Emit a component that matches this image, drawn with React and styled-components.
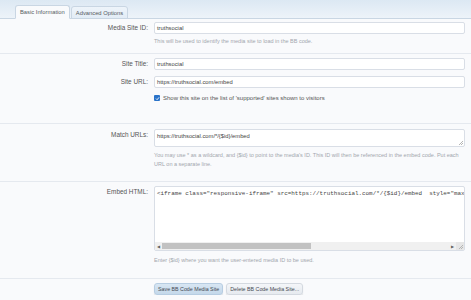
import React from 'react';
import styled, { createGlobalStyle } from 'styled-components';

const GlobalStyle = createGlobalStyle`
    body {
        margin: 0;
        background: #f9fafc;
        font-family: "Liberation Sans", Arial, sans-serif;
        color: #3a3a3a;
    }
`

const Header = styled.div`
    height: 18px;
    background: linear-gradient(#dce8f3, #edf3f9);
    border-bottom: 1px solid #c9d6e3;
    display: flex;
    align-items: flex-end;
    padding-left: 15px;
    gap: 1px;
`

const Tab = styled.div`
    height: ${p => (p.active ? '14px' : '13px')};
    margin-bottom: -1px;
    padding: 0 4px;
    display: flex;
    align-items: center;
    font-size: 5.8px;
    color: #555a62;
    background: ${p => (p.active ? '#f9fafc' : 'linear-gradient(#eef4fa, #e2ecf6)')};
    border: 1px solid #c9d6e3;
    border-bottom-color: ${p => (p.active ? '#f9fafc' : '#c9d6e3')};
    border-radius: 3px 3px 0 0;
    box-sizing: border-box;
`

const Section = styled.div`
    display: flex;
    flex-direction: column;
    gap: ${p => p.gap || 0}px;
    padding: ${p => p.top}px 6px ${p => p.bottom}px 0;
    border-bottom: ${p => (p.last ? 'none' : '1px solid #e5e9ef')};
`

const Row = styled.div`
    display: grid;
    grid-template-columns: 148px 1fr;
    column-gap: 6px;
`

const Label = styled.div`
    text-align: right;
    font-size: 6.4px;
    line-height: 12px;
    color: #555;
`

const Field = styled.div`
    display: flex;
    flex-direction: column;
    min-width: 0;
`

const Input = styled.div`
    height: 12px;
    box-sizing: border-box;
    background: #fff;
    border: 1px solid #d9dee6;
    border-radius: 2px;
    padding: 0 2px;
    font-size: 5.8px;
    line-height: 10px;
    color: #444;
`

const TextArea = styled.div`
    position: relative;
    height: ${p => p.h}px;
    box-sizing: border-box;
    background: #fff;
    border: 1px solid #d9dee6;
    border-radius: 2px;
    display: flex;
    flex-direction: column;
    overflow: hidden;
`

const AreaText = styled.div`
    flex: 1;
    padding: 2px 2px 0;
    font-size: ${p => (p.mono ? '5.9px' : '5.8px')};
    font-family: ${p => (p.mono ? '"Liberation Mono", "DejaVu Sans Mono", monospace' : 'inherit')};
    line-height: 9px;
    white-space: pre;
    overflow: hidden;
    color: #444;
`

const Grip = styled.span`
    position: absolute;
    right: 1px;
    bottom: 1px;
    width: 4px;
    height: 4px;
    background: linear-gradient(135deg, transparent 45%, #b5b5b5 45%, #b5b5b5 55%, transparent 55%, transparent 70%, #b5b5b5 70%, #b5b5b5 80%, transparent 80%);
`

const ScrollBar = styled.div`
    height: 8px;
    display: flex;
    align-items: center;
    background: #f0f0f0;
    font-size: 4px;
    color: #606060;
`

const Arrow = styled.span`
    width: 7px;
    text-align: center;
`

const Track = styled.div`
    flex: 1;
    height: 100%;
    display: flex;
    align-items: center;
`

const Thumb = styled.div`
    height: 6px;
    background: #c2c2c2;
`

const Corner = styled.div`
    width: 8px;
    height: 8px;
    background: #e6e6e6;
    position: relative;
`

const Hint = styled.div`
    margin-top: ${p => p.mt}px;
    font-size: 5.5px;
    line-height: ${p => p.lh || 8}px;
    color: #a2a6ad;
`

const CheckRow = styled.div`
    margin-top: 5px;
    height: 10px;
    display: flex;
    align-items: center;
    gap: 3px;
    font-size: 6px;
    color: #555;
`

const Box = styled.span`
    width: 6px;
    height: 6px;
    border-radius: 1px;
    background: #2a73c9;
    display: flex;
    align-items: center;
    justify-content: center;
`

const Buttons = styled.div`
    grid-column: 2;
    display: flex;
    gap: 3px;
`

const Button = styled.div`
    height: 12px;
    box-sizing: border-box;
    padding: 0 3px;
    display: flex;
    align-items: center;
    font-size: 5.3px;
    color: #454a52;
    border-radius: 3px;
    border: 1px solid ${p => (p.primary ? '#b7cde2' : '#d4d9e0')};
    background: ${p => (p.primary ? 'linear-gradient(#d8e6f3, #c4d8ea)' : 'linear-gradient(#f4f6f9, #e6eaef)')};
    box-shadow: 0 1px 1px rgba(0, 0, 0, 0.12);
`

function App() {
    const embed = '<iframe class="responsive-iframe" src=https://truthsocial.com/*/{$id}/embed  style="max-width: 600px; border: 0" width="600" allowfullscreen="allowfullscreen"></iframe>'
    const matchHint = "You may use * as a wildcard, and {$id} to point to the media's ID. This ID will then be referenced in the embed code. Put each URL on a separate line."
    const embedHint = 'Enter {$id} where you want the user-entered media ID to be used.'

    return (
        <div>
            <GlobalStyle />
            <Header>
                <Tab active>Basic Information</Tab>
                <Tab>Advanced Options</Tab>
            </Header>

            <Section top={3} bottom={8}>
                <Row>
                    <Label>Media Site ID:</Label>
                    <Field>
                        <Input>truthsocial</Input>
                        <Hint mt={3}>This will be used to identify the media site to load in the BB code.</Hint>
                    </Field>
                </Row>
            </Section>

            <Section top={4} bottom={20} gap={6}>
                <Row>
                    <Label>Site Title:</Label>
                    <Input>truthsocial</Input>
                </Row>
                <Row>
                    <Label>Site URL:</Label>
                    <Field>
                        <Input>https://truthsocial.com/embed</Input>
                        <CheckRow>
                            <Box>
                                <svg width="5" height="5" viewBox="0 0 10 10">
                                    <path d="M2 5.2 L4.2 7.4 L8.2 2.6" stroke="#fff" strokeWidth="1.8" fill="none" />
                                </svg>
                            </Box>
                            Show this site on the list of 'supported' sites shown to visitors
                        </CheckRow>
                    </Field>
                </Row>
            </Section>

            <Section top={5} bottom={12}>
                <Row>
                    <Label>Match URLs:</Label>
                    <Field>
                        <TextArea h={18}>
                            <AreaText>{'https://truthsocial.com/*/{$id}/embed'}</AreaText>
                            <Grip />
                        </TextArea>
                        <Hint mt={4} lh={9}>{matchHint}</Hint>
                    </Field>
                </Row>
            </Section>

            <Section top={4} bottom={14}>
                <Row>
                    <Label>Embed HTML:</Label>
                    <Field>
                        <TextArea h={65}>
                            <AreaText mono>{embed}</AreaText>
                            <ScrollBar>
                                <Arrow>◀</Arrow>
                                <Track>
                                    <Thumb style={{ width: '52%' }} />
                                </Track>
                                <Arrow>▶</Arrow>
                                <Corner><Grip /></Corner>
                            </ScrollBar>
                        </TextArea>
                        <Hint mt={5}>{embedHint}</Hint>
                    </Field>
                </Row>
            </Section>

            <Section top={4} bottom={0} last>
                <Row>
                    <Buttons>
                        <Button primary>Save BB Code Media Site</Button>
                        <Button>Delete BB Code Media Site...</Button>
                    </Buttons>
                </Row>
            </Section>
        </div>
    )
}

export default App;
